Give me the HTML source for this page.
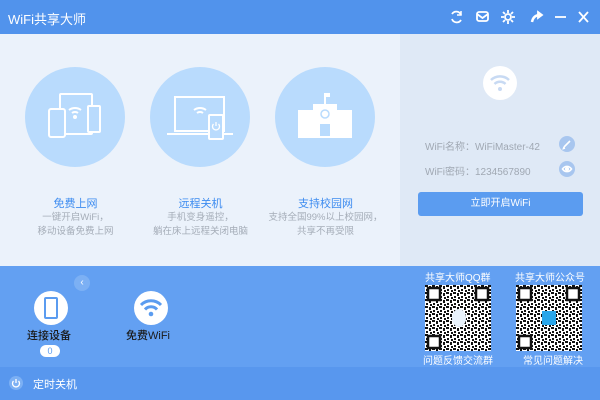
<!DOCTYPE html>
<html><head><meta charset="utf-8"><style>
*{margin:0;padding:0;box-sizing:border-box}
body{width:600px;height:400px;overflow:hidden;font-family:"Liberation Sans","Noto Sans CJK SC",sans-serif;background:#ebf2fb;position:relative}
.abs{position:absolute}
.title{left:0;top:0;width:600px;height:34px;background:#5193ec;color:#fff;font-size:13px}
.main{left:0;top:34px;width:400px;height:232px;background:#ebf2fb}
.right{left:400px;top:34px;width:200px;height:232px;background:#dfe9f6}
.circ{width:100px;height:100px;border-radius:50%;background:#b9dbfd;top:67px}
.h{color:#3d8cf0;font-size:11px;text-align:center;width:125px;top:195px}
.d{color:#a5adb8;font-size:9.5px;text-align:center;width:125px;top:211px;line-height:14px}
.bot{left:0;top:266px;width:600px;height:101px;background:#63a0f2}
.foot{left:0;top:367px;width:600px;height:33px;background:#5897ee}
.w{color:#fff}
</style></head><body>
<div class="abs title"><span class="abs" style="left:8px;top:9px">WiFi共享大师</span>
<svg class="abs" style="left:448px;top:9px" width="150" height="16" viewBox="0 0 150 16" fill="none" stroke="#fff" stroke-width="1.8">
<path d="M4 5a5 5 0 0 1 9 1M13 11a5 5 0 0 1-9-1"/><path d="M13 2v4h-4" stroke-width="1.5"/>
<rect x="29" y="3" width="11" height="9" rx="2"/><path d="M29 5l5.5 4 5.5-4"/>
<circle cx="60" cy="8" r="3"/><path d="M60 1v3M60 12v3M53 8h3M64 8h3M55 3l2 2M63 11l2 2M55 13l2-2M63 5l2-2"/>
<path d="M84 13c1-5 4-7 8-7" stroke-width="2.5"/><path d="M90 3l4 3-4 3z" fill="#fff"/>
<path d="M107 8h11"/><path d="M131 3l9 10M140 3l-9 10"/></svg></div>
<div class="abs main"></div><div class="abs right"></div>
<div class="abs circ" style="left:25px"></div><div class="abs circ" style="left:150px"></div><div class="abs circ" style="left:275px"></div>
<svg class="abs" style="left:0;top:60px" width="400" height="110" fill="none" stroke="#fff" stroke-width="2">
<rect x="60" y="34" width="32" height="40" rx="1"/><rect x="49" y="49" width="16" height="28" rx="2" fill="#b9dbfd"/><rect x="88" y="46" width="12" height="26" rx="1" fill="#b9dbfd"/>
<path d="M69 50a10 10 0 0 1 12 0M72 53a5 5 0 0 1 6 0"/><circle cx="75" cy="57" r="1" fill="#fff"/>
<rect x="175" y="37" width="49" height="34" /><path d="M167 74h66"/><path d="M194 50a10 10 0 0 1 12 0M197 53a5 5 0 0 1 6 0"/><rect x="209" y="55" width="14" height="24" rx="1" fill="#b9dbfd"/>
<path d="M213.5 64a3.5 3.5 0 1 0 5 0M216 62v4" stroke-width="1.3"/>
<g fill="#fff" stroke="none"><rect x="298" y="50" width="22" height="28"/><rect x="330" y="50" width="22" height="28"/><rect x="313" y="44" width="24" height="34"/><rect x="324" y="33" width="2" height="12"/><rect x="324" y="33" width="6" height="4"/></g>
<circle cx="325" cy="54" r="4" stroke="#b9dbfd" stroke-width="1.5"/><rect x="320" y="64" width="10" height="12" fill="#b9dbfd" stroke="none"/>
</svg>
<div class="abs h" style="left:13px">免费上网</div><div class="abs d" style="left:13px">一键开启WiFi，<br>移动设备免费上网</div>
<div class="abs h" style="left:138px">远程关机</div><div class="abs d" style="left:138px">手机变身遥控，<br>躺在床上远程关闭电脑</div>
<div class="abs h" style="left:263px">支持校园网</div><div class="abs d" style="left:258px;width:135px">支持全国99%以上校园网，<br>共享不再受限</div>
<div class="abs" style="left:483px;top:66px;width:34px;height:34px;border-radius:50%;background:#fff"></div>
<svg class="abs" style="left:483px;top:66px" width="34" height="34" fill="none" stroke="#c8daf3" stroke-width="2.5"><path d="M8 14a13 13 0 0 1 18 0M11.5 18a8 8 0 0 1 11 0"/><circle cx="17" cy="23" r="2" fill="#c8daf3" stroke="none"/></svg>
<div class="abs" style="left:425px;top:138px;font-size:10px;color:#a0a8b3">WiFi名称：WiFiMaster-42</div>
<div class="abs" style="left:425px;top:163px;font-size:10px;color:#a0a8b3">WiFi密码：1234567890</div>
<div class="abs" style="left:559px;top:136px;width:16px;height:16px;border-radius:50%;background:#a8c6ef"></div>
<div class="abs" style="left:559px;top:161px;width:16px;height:16px;border-radius:50%;background:#a8c6ef"></div>
<svg class="abs" style="left:559px;top:136px" width="16" height="41" fill="none" stroke="#fff" stroke-width="1.6"><path d="M5 11l6-6M5 11l-0.5 1.5 1.5-.5"/><path d="M3.5 33c2.5-3.5 6.5-3.5 9 0c-2.5 3.5-6.5 3.5-9 0z"/><circle cx="8" cy="33" r="1.3" fill="#fff"/></svg>
<div class="abs" style="left:418px;top:192px;width:165px;height:24px;border-radius:3px;background:#5b9cf0;color:#fff;font-size:10px;text-align:center;line-height:24px">立即开启WiFi</div>
<div class="abs bot"></div><div class="abs foot"></div>
<div class="abs" style="left:74px;top:275px;width:16px;height:16px;border-radius:50%;background:#7cb0f4;color:#fff;font-size:10px;text-align:center;line-height:16px">‹</div>
<div class="abs" style="left:34px;top:291px;width:34px;height:34px;border-radius:50%;background:#fff"></div>
<div class="abs" style="left:44px;top:297px;width:14px;height:22px;border:2px solid #5b9cf0;border-radius:2px"></div>
<div class="abs" style="left:134px;top:291px;width:34px;height:34px;border-radius:50%;background:#fff"></div>
<svg class="abs" style="left:134px;top:291px" width="34" height="34" fill="none" stroke="#5b9cf0" stroke-width="3"><path d="M7 14a14 14 0 0 1 20 0M11 18.5a8 8 0 0 1 12 0"/><circle cx="17" cy="23" r="2.3" fill="#5b9cf0" stroke="none"/></svg>
<div class="abs" style="left:27px;top:327px;font-size:11px;color:#1a1a1a;font-weight:500">连接设备</div>
<div class="abs" style="left:126px;top:327px;font-size:11px;color:#1a1a1a;font-weight:500">免费WiFi</div>
<div class="abs" style="left:40px;top:345px;width:20px;height:12px;border-radius:6px;background:#fff;color:#5b9cf0;font-size:9px;text-align:center;line-height:12px">0</div>
<svg width="0" height="0" class="abs"><defs><pattern id="q" width="7" height="7" patternUnits="userSpaceOnUse"><rect width="7" height="7" fill="#fff"/><rect x="0" y="0" width="3" height="2" fill="#111"/><rect x="4" y="1" width="2" height="3" fill="#111"/><rect x="1" y="4" width="2" height="2" fill="#111"/><rect x="5" y="5" width="2" height="2" fill="#111"/></pattern></defs></svg>
<div class="abs w" style="left:425px;top:269px;font-size:10px">共享大师QQ群</div>
<div class="abs w" style="left:515px;top:269px;font-size:10px">共享大师公众号</div>
<svg class="abs" style="left:425px;top:285px" width="66" height="66"><rect width="66" height="66" fill="url(#q)"/><g fill="#fff" stroke="#111" stroke-width="2.5"><rect x="3" y="3" width="12" height="12"/><rect x="51" y="3" width="12" height="12"/><rect x="3" y="51" width="12" height="12"/></g><ellipse cx="34" cy="33" rx="7" ry="9" fill="#e8f2fc"/></svg>
<svg class="abs" style="left:516px;top:285px" width="66" height="66"><rect width="66" height="66" fill="url(#q)"/><g fill="#fff" stroke="#111" stroke-width="2.5"><rect x="3" y="3" width="12" height="12"/><rect x="51" y="3" width="12" height="12"/><rect x="3" y="51" width="12" height="12"/></g><rect x="26" y="26" width="14" height="14" fill="#2aa6ea"/></svg>
<div class="abs w" style="left:423px;top:352px;font-size:10px">问题反馈交流群</div>
<div class="abs w" style="left:523px;top:352px;font-size:10px">常见问题解决</div>
<div class="abs" style="left:9px;top:376px;width:14px;height:14px;border-radius:50%;background:#7cb0f4"></div>
<svg class="abs" style="left:9px;top:376px" width="14" height="14" fill="none" stroke="#fff" stroke-width="1.3"><path d="M4.5 5a3.5 3.5 0 1 0 5 0M7 3v4"/></svg>
<div class="abs w" style="left:33px;top:376px;font-size:11px">定时关机</div>
</body></html>
